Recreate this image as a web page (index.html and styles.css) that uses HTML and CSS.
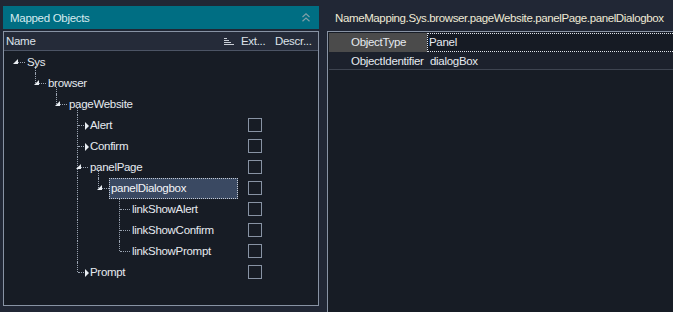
FILE: index.html
```html
<!DOCTYPE html>
<html lang="en">
<head>
    <meta charset="UTF-8">
    <title>Mapped Objects</title>
    <link rel="stylesheet" href="styles.css">
</head>
<body>
    <div class="app">
        <!-- left: mapped objects tree -->
        <div class="left">
            <div class="left-head">
                <span>Mapped Objects</span>
                <svg class="collapse" width="8" height="9" viewBox="0 0 8 9">
                    <path d="M0.5 4 L4 0.8 L7.5 4 M0.5 8.2 L4 5 L7.5 8.2" fill="none" stroke="#7fa0a8" stroke-width="1.2"/>
                </svg>
            </div>
            <div class="tree-box">
                <div class="tree-head">
                    <div class="name-col h">
                        <span>Name</span>
                        <svg class="sort" width="10" height="7" viewBox="0 0 10 7">
                            <path d="M0 0.5 H3 M0 2.5 H5 M0 4.5 H7 M0 6.5 H10" stroke="#c9ced6" stroke-width="1"/>
                        </svg>
                    </div>
                    <div class="ext-col h">Ext...</div>
                    <div class="desc-col h">Descr...</div>
                </div>
                <div class="rows">
                    <div class="row open">
                        <div class="name-col">
                            <span class="cell root"><i class="exp down"></i></span>
                            <span class="node">Sys</span>
                        </div>
                    </div>
                    <div class="row open">
                        <div class="name-col">
                            <span class="cell"></span>
                            <span class="cell elbow"><i class="exp down"></i></span>
                            <span class="node">browser</span>
                        </div>
                    </div>
                    <div class="row open">
                        <div class="name-col">
                            <span class="cell"></span><span class="cell"></span>
                            <span class="cell elbow"><i class="exp down"></i></span>
                            <span class="node">pageWebsite</span>
                        </div>
                    </div>
                    <div class="row">
                        <div class="name-col">
                            <span class="cell"></span><span class="cell"></span><span class="cell"></span>
                            <span class="cell tee"><i class="exp right"></i></span>
                            <span class="node">Alert</span>
                        </div>
                        <div class="ext-col"><span class="check"></span></div>
                    </div>
                    <div class="row">
                        <div class="name-col">
                            <span class="cell"></span><span class="cell"></span><span class="cell"></span>
                            <span class="cell tee"><i class="exp right"></i></span>
                            <span class="node">Confirm</span>
                        </div>
                        <div class="ext-col"><span class="check"></span></div>
                    </div>
                    <div class="row open">
                        <div class="name-col">
                            <span class="cell"></span><span class="cell"></span><span class="cell"></span>
                            <span class="cell tee"><i class="exp down"></i></span>
                            <span class="node">panelPage</span>
                        </div>
                        <div class="ext-col"><span class="check"></span></div>
                    </div>
                    <div class="row open sel">
                        <div class="name-col">
                            <span class="cell"></span><span class="cell"></span><span class="cell"></span>
                            <span class="cell pipe"></span>
                            <span class="cell elbow"><i class="exp down"></i></span>
                            <span class="node"><span class="txt">panelDialogbox</span></span>
                        </div>
                        <div class="ext-col"><span class="check"></span></div>
                    </div>
                    <div class="row">
                        <div class="name-col">
                            <span class="cell"></span><span class="cell"></span><span class="cell"></span>
                            <span class="cell pipe"></span><span class="cell"></span>
                            <span class="cell tee"></span>
                            <span class="node">linkShowAlert</span>
                        </div>
                        <div class="ext-col"><span class="check"></span></div>
                    </div>
                    <div class="row">
                        <div class="name-col">
                            <span class="cell"></span><span class="cell"></span><span class="cell"></span>
                            <span class="cell pipe"></span><span class="cell"></span>
                            <span class="cell tee"></span>
                            <span class="node">linkShowConfirm</span>
                        </div>
                        <div class="ext-col"><span class="check"></span></div>
                    </div>
                    <div class="row">
                        <div class="name-col">
                            <span class="cell"></span><span class="cell"></span><span class="cell"></span>
                            <span class="cell pipe"></span><span class="cell"></span>
                            <span class="cell elbow"></span>
                            <span class="node">linkShowPrompt</span>
                        </div>
                        <div class="ext-col"><span class="check"></span></div>
                    </div>
                    <div class="row">
                        <div class="name-col">
                            <span class="cell"></span><span class="cell"></span><span class="cell"></span>
                            <span class="cell elbow"><i class="exp right"></i></span>
                            <span class="node">Prompt</span>
                        </div>
                        <div class="ext-col"><span class="check"></span></div>
                    </div>
                </div>
            </div>
        </div>

        <!-- right: properties of the selected object -->
        <div class="right">
            <div class="path">NameMapping.Sys.browser.pageWebsite.panelPage.panelDialogbox</div>
            <div class="grid">
                <div class="prow active">
                    <div class="pname">ObjectType</div>
                    <div class="pval">Panel</div>
                </div>
                <div class="prow">
                    <div class="pname">ObjectIdentifier</div>
                    <div class="pval">dialogBox</div>
                </div>
            </div>
        </div>
    </div>
</body>
</html>
```

FILE: styles.css
```css
/* page */
body, html {
    margin: 0;
    padding: 0;
    height: 100%;
    background: #212735;
    font-family: 'Liberation Sans', Arial, sans-serif;
    font-size: 11.5px;
    letter-spacing: -0.3px;
    color: #e6eaf0;
    overflow: hidden;
}

.app {
    display: flex;
    height: 312px;
    box-sizing: border-box;
    padding: 6px 0 6px 3px;
}

/* left panel */
.left {
    flex: none;
    width: 316px;
    display: flex;
    flex-direction: column;
    gap: 2px;
}

.left-head {
    height: 23px;
    background: #006e83;
    color: #d6ebef;
    display: flex;
    align-items: center;
    justify-content: space-between;
    padding: 0 9px 0 7px;
}

.tree-box {
    flex: 1;
    border: 1px solid #8893a4;
    background: #171c25;
    display: flex;
    flex-direction: column;
}

.tree-head {
    height: 18px;
    display: flex;
    align-items: center;
    background: #252b39;
    border-bottom: 1px solid #4c5465;
}

.h {
    color: #dde2e9;
}

.name-col {
    width: 236px;
    display: flex;
    align-items: center;
    padding-left: 2px;
    box-sizing: border-box;
}

.name-col.h {
    justify-content: space-between;
    padding-right: 6px;
}

.ext-col {
    width: 34px;
    display: flex;
    align-items: center;
}

.ext-col.h {
    padding-left: 1px;
}

.desc-col {
    flex: 1;
}

.rows {
    padding-top: 1px;
}

.row {
    display: flex;
    height: 21px;
}

/* tree connectors */
.cell {
    width: 21px;
    height: 21px;
    flex: none;
    position: relative;
}

.pipe::before, .tee::before, .elbow::before {
    content: "";
    position: absolute;
    left: 8px;
    top: 0;
    bottom: 0;
    border-left: 1px dotted #9aa3b1;
}

.elbow::before {
    bottom: auto;
    height: 10px;
}

.tee::after, .elbow::after, .root::after {
    content: "";
    position: absolute;
    left: 9px;
    width: 10px;
    top: 10px;
    border-top: 1px dotted #9aa3b1;
}

.exp {
    position: absolute;
    z-index: 1;
}

.exp.down {
    left: 7px;
    top: 7px;
    border-bottom: 5px solid #e9edf2;
    border-left: 5px solid transparent;
}

.exp.right {
    left: 8px;
    top: 7px;
    border-left: 4px solid #e9edf2;
    border-top: 4px solid transparent;
    border-bottom: 4px solid transparent;
}

.node {
    position: relative;
    line-height: 21px;
    white-space: nowrap;
    flex: 1;
}

.open .node::before {
    content: "";
    position: absolute;
    left: 8px;
    top: 14px;
    bottom: 0;
    border-left: 1px dotted #9aa3b1;
}

.sel .txt {
    display: block;
    position: relative;
    z-index: 1;
    width: 129px;
    height: 21px;
    box-sizing: border-box;
    margin-left: -2px;
    padding-left: 1px;
    line-height: 19px;
    background: #3a4962;
    border: 1px dotted #c5cbd5;
    color: #f4f6f9;
}

.check {
    width: 12px;
    height: 12px;
    margin: 0 0 1px 8px;
    border: 1px solid #8893a4;
}

/* right panel */
.right {
    flex: 1;
    min-width: 0;
    display: flex;
    flex-direction: column;
    margin-left: 8px;
}

.path {
    height: 25px;
    line-height: 24px;
    padding-left: 8px;
    color: #efead6;
    letter-spacing: -0.38px;
    white-space: nowrap;
}

.grid {
    flex: 1;
    margin-bottom: -6px;
    border-left: 1px solid #8893a4;
    border-top: 1px solid #8893a4;
    padding: 1px 0 0 1px;
    background: #171c25;
}

.prow {
    display: flex;
    height: 18px;
    line-height: 18px;
    background: #1c212c;
}

.prow + .prow {
    height: 17px;
    border-bottom: 1px solid #3e4450;
}

.pname {
    width: 98px;
    padding-left: 22px;
    box-sizing: border-box;
    white-space: nowrap;
}

.prow.active {
    height: 19px;
    line-height: 19px;
}

.active .pname {
    background: #4b4b4b;
}

.pval {
    flex: 1;
    padding-left: 3px;
}

.active .pval {
    background: #161b24;
    border-top: 1px dotted #dfe3ea;
    border-bottom: 1px dotted #dfe3ea;
    border-left: 1px dotted #dfe3ea;
    line-height: 17px;
    padding-left: 1px;
}
```
